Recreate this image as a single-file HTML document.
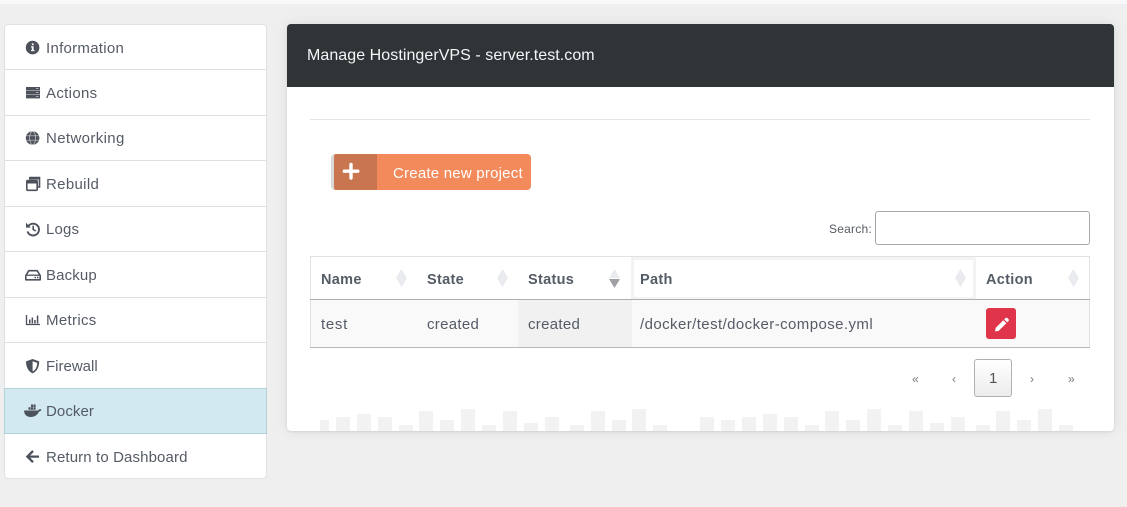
<!DOCTYPE html>
<html lang="en"><head><meta charset="utf-8"><title>Manage HostingerVPS</title>
<style>
*{box-sizing:border-box}
html,body{margin:0;padding:0}
body{width:1127px;height:507px;overflow:hidden;background:#efefef;position:relative;font-family:"Liberation Sans",sans-serif;font-size:15px;color:#555b66}
.a{position:absolute}
.t{position:absolute;white-space:nowrap;line-height:20px}
#strip{left:0;top:0;width:1127px;height:4px;background:#f8f8fa}
#side{left:4px;top:24px;width:263px;height:455px;background:#fff;border:1px solid #e1e1e1;border-radius:4px}
.ln{position:absolute;left:5px;width:261px;height:1px;background:#dfdfdf}
#act{left:4px;top:388px;width:263px;height:46px;background:#d1e9ef;border:1px solid #b2d2da}
#panel{left:287px;top:24px;width:827px;height:407px;background:#fff;border-radius:4px;box-shadow:0 0 12px rgba(0,0,0,.09),0 1px 2px rgba(0,0,0,.08);overflow:hidden}
#head{left:0;top:0;width:827px;height:63px;background:#2f3437}
.bar{position:absolute;bottom:0;width:14px;background:#f2f2f2}
#hr{left:310px;top:119px;width:780px;height:1px;background:#e5e5e5}
#btn{left:331px;top:154px;width:200px;height:36px;background:#f38a5b;border-radius:4px;border-left:3px solid #d9d9d9}
#btnd{left:334px;top:154px;width:43px;height:36px;background:#c9754f;border-radius:3px 0 0 3px}
#search{left:875px;top:211px;width:215px;height:34px;background:#fff;border:1px solid #a8a8a8;border-radius:3px}
#tbl{left:310px;top:256px;width:780px;height:92px;border:1px solid #e2e2e2;background:#fff}
#row{left:311px;top:300px;width:778px;height:47px;background:#f9f9f9}
#sorted{left:518px;top:300px;width:114px;height:47px;background:#f1f1f1}
#hl1{left:310px;top:299px;width:780px;height:1px;background:#b0b0b0}
#hl2{left:310px;top:347px;width:780px;height:1px;background:#b8b8b8}
#pf{left:631px;top:257px;width:345px;height:42px;border:3px solid #f3f3f3;border-bottom-width:2px;background:#fff}
#red{left:986px;top:308px;width:30px;height:31px;background:#e0344a;border-radius:3px}
#pg{left:974px;top:359px;width:38px;height:38px;background:linear-gradient(#fff,#ececec);border:1px solid #b0b0b0;border-radius:3px}
.th{font-weight:bold;color:#555b66;font-size:14.5px;letter-spacing:.3px}
.pgn{font-size:12px;color:#777}
</style></head><body>
<div class="a" id="strip"></div>

<div class="a" id="side"></div>
<div class="ln" style="top:69px"></div><div class="ln" style="top:115px"></div><div class="ln" style="top:160px"></div><div class="ln" style="top:206px"></div><div class="ln" style="top:251px"></div><div class="ln" style="top:297px"></div><div class="ln" style="top:342px"></div>
<div class="a" id="act"></div>
<span class="t" style="left:46px;top:39px;letter-spacing:.28px">Information</span>
<span class="t" style="left:46px;top:84px;letter-spacing:.33px">Actions</span>
<span class="t" style="left:46px;top:129px;letter-spacing:.37px">Networking</span>
<span class="t" style="left:46px;top:175px;letter-spacing:.33px">Rebuild</span>
<span class="t" style="left:46px;top:220px;letter-spacing:.15px">Logs</span>
<span class="t" style="left:46px;top:266px;letter-spacing:.13px">Backup</span>
<span class="t" style="left:46px;top:311px;letter-spacing:.33px">Metrics</span>
<span class="t" style="left:46px;top:357px">Firewall</span>
<span class="t" style="left:46px;top:402px;letter-spacing:.07px">Docker</span>
<span class="t" style="left:46px;top:448px;letter-spacing:.12px">Return to Dashboard</span>

<div class="a" id="panel">
<div class="a" id="head"></div>
<i class="bar" style="left:33px;width:9px;height:11px"></i><i class="bar" style="left:49px;height:14px"></i><i class="bar" style="left:70px;height:17px"></i><i class="bar" style="left:91px;height:14px"></i><i class="bar" style="left:112px;height:6px"></i><i class="bar" style="left:132px;height:20px"></i><i class="bar" style="left:153px;height:11px"></i><i class="bar" style="left:174px;height:22px"></i><i class="bar" style="left:195px;height:6px"></i><i class="bar" style="left:216px;height:20px"></i><i class="bar" style="left:237px;height:8px"></i><i class="bar" style="left:258px;height:14px"></i><i class="bar" style="left:283px;height:6px"></i><i class="bar" style="left:304px;height:20px"></i><i class="bar" style="left:325px;height:11px"></i><i class="bar" style="left:345px;height:22px"></i><i class="bar" style="left:366px;height:6px"></i>
<i class="bar" style="left:413px;height:14px"></i><i class="bar" style="left:434px;height:11px"></i><i class="bar" style="left:455px;height:14px"></i><i class="bar" style="left:476px;height:17px"></i><i class="bar" style="left:497px;height:14px"></i><i class="bar" style="left:518px;height:6px"></i><i class="bar" style="left:538px;height:20px"></i><i class="bar" style="left:559px;height:11px"></i><i class="bar" style="left:580px;height:22px"></i><i class="bar" style="left:601px;height:6px"></i><i class="bar" style="left:622px;height:20px"></i><i class="bar" style="left:643px;height:8px"></i><i class="bar" style="left:664px;height:14px"></i><i class="bar" style="left:689px;height:6px"></i><i class="bar" style="left:709px;height:20px"></i><i class="bar" style="left:730px;height:11px"></i><i class="bar" style="left:751px;height:22px"></i><i class="bar" style="left:772px;height:6px"></i>
</div>
<span class="t" style="left:307px;top:46px;color:#f4f6f8;font-size:16px;letter-spacing:.06px">Manage HostingerVPS - server.test.com</span>
<div class="a" id="hr"></div>

<div class="a" id="btn"></div><div class="a" id="btnd"></div>
<span class="t" style="left:393px;top:164px;color:#fff;letter-spacing:.22px">Create new project</span>

<span class="t" style="left:829px;top:219px;font-size:12px;letter-spacing:.22px">Search:</span>
<div class="a" id="search"></div>

<div class="a" id="tbl"></div>
<div class="a" id="row"></div><div class="a" id="sorted"></div>
<div class="a" id="pf"></div>
<div class="a" id="hl1"></div><div class="a" id="hl2"></div>
<span class="t th" style="left:321px;top:270px">Name</span>
<span class="t th" style="left:427px;top:270px">State</span>
<span class="t th" style="left:528px;top:270px">Status</span>
<span class="t th" style="left:640px;top:270px">Path</span>
<span class="t th" style="left:986px;top:270px">Action</span>
<span class="t" style="left:321px;top:315px;letter-spacing:.7px">test</span>
<span class="t" style="left:427px;top:315px;letter-spacing:.3px">created</span>
<span class="t" style="left:528px;top:315px;letter-spacing:.3px">created</span>
<span class="t" style="left:640px;top:315px;letter-spacing:.42px">/docker/test/docker-compose.yml</span>
<div class="a" id="red"></div>

<div class="a" id="pg"></div>
<span class="t pgn" style="left:912px;top:369px">«</span>
<span class="t pgn" style="left:952px;top:369px">‹</span>
<span class="t" style="left:989px;top:369px;color:#555">1</span>
<span class="t pgn" style="left:1030px;top:369px">›</span>
<span class="t pgn" style="left:1068px;top:369px">»</span>

<svg class="a" style="left:0;top:0" width="1127" height="507" viewBox="0 0 1127 507" fill="#4c515c">
<!-- info -->
<circle cx="32.6" cy="47.6" r="6.8"/><rect x="31.8" y="43.4" width="1.8" height="1.8" fill="#fff"/><path d="M31 46.3h2.6v3.7h.9v1.1h-3.5V50h.8v-2.6H31z" fill="#fff"/>
<!-- server -->
<rect x="26" y="87" width="14" height="3.6"/><rect x="26" y="91" width="14" height="3.4"/><rect x="26" y="94.800" width="14" height="3.6"/><path d="M36 88.500h2.500M36 92.500h2.500M36 96.500h2.500" stroke="#c8c8c8" stroke-width=".8"/>
<!-- globe -->
<circle cx="32.600" cy="138" r="6.800"/><path d="M26 135.800h13M26 140.200h13" stroke="#ccc" stroke-width=".7"/><ellipse cx="32.600" cy="138" rx="3" ry="6.600" fill="none" stroke="#ccc" stroke-width=".7"/>
<!-- rebuild -->
<path d="M29.500 177.500h10v9.500h-2" fill="none" stroke="#4c515c" stroke-width="1.600"/><rect x="26.800" y="180.500" width="10.400" height="9.800" rx="1" fill="none" stroke="#4c515c" stroke-width="1.600"/><rect x="26.500" y="180" width="11" height="3.500"/><rect x="29" y="177" width="10.500" height="2.500"/>
<!-- history -->
<path d="M28.400 226a5.900 5.900 0 1 1-.9 5.400" fill="none" stroke="#4c515c" stroke-width="1.900"/><path d="M26 222.800v4.800h4.800z"/><path d="M33.200 225.800v3.600l2.500 1.600" fill="none" stroke="#4c515c" stroke-width="1.600"/>
<!-- hdd -->
<path d="M25.800 275.500l3-4.800h8.400l3 4.800v4.300H25.800z" fill="none" stroke="#4c515c" stroke-width="1.600" stroke-linejoin="round"/><path d="M26 275.200h14" stroke="#4c515c" stroke-width="1.300"/><rect x="34.500" y="276.800" width="1.500" height="1.500"/><rect x="37" y="276.800" width="1.500" height="1.500"/>
<!-- chart -->
<path d="M26.500 315v9.500H40" fill="none" stroke="#4c515c" stroke-width="1.300"/><path d="M29 319.500h1.500v4H29zM31.600 317.500h1.500v6h-1.500zM34.200 320h1.500v3.500h-1.500zM36.800 315.500h1.500v8h-1.500z"/>
<!-- shield -->
<path d="M32.600 359l6.600 2.400c0 5.100-1.700 9.700-6.600 12-4.900-2.300-6.600-6.900-6.600-12z"/><path d="M32.600 361.200l4.600 1.700c-.1 3.700-1.300 6.800-4.600 8.600z" fill="#fff"/>
<!-- docker -->
<path d="M24 410.500h14c.5-1 1.400-1.500 3.400-1-.3 1.200-1 1.900-2.400 2.100-1.400 3.300-4.300 5.400-8.200 5.400-4.200 0-6.500-2.500-6.800-6.500z"/><path d="M28.500 407.300h2.100v2.500h-2.100zM31 407.300h2.100v2.500H31zM33.500 407.300h2.100v2.500h-2.100zM31 404.500h2.100V407H31zM33.500 404.500h2.100V407h-2.100z"/>
<!-- arrow -->
<path d="M33 451l-5.600 5.600 5.600 5.600M28 456.600h11" fill="none" stroke="#4c515c" stroke-width="2.300"/>
<!-- plus -->
<path d="M351 164.500v13.500M344.300 171.200h13.500" stroke="#fff" stroke-width="3.400" stroke-linecap="round"/>
<!-- sort -->
<g fill="#e9ebee"><path d="M401.500 269l5.500 9-5.500 9-5.500-9z"/><path d="M502.500 269l5.500 9-5.500 9-5.500-9z"/><path d="M614.500 269l5.500 9h-11z"/><path d="M960.500 269l5.500 9-5.500 9-5.500-9z"/><path d="M1073.500 269l5.500 9-5.500 9-5.500-9z"/></g>
<path d="M614.500 288l-5.500-9h11z" fill="#9ea0a4"/>
<!-- pencil -->
<g transform="translate(-1 0)" fill="#fff"><path d="M996 331.500l.7-3.600 7.600-7.600 3 3-7.600 7.600z"/><path d="M1005.200 319.400l1.400-1.400c.5-.5 1.200-.5 1.700 0l1.300 1.300c.5.5.5 1.200 0 1.700l-1.400 1.400z"/></g>
</svg>
</body></html>
